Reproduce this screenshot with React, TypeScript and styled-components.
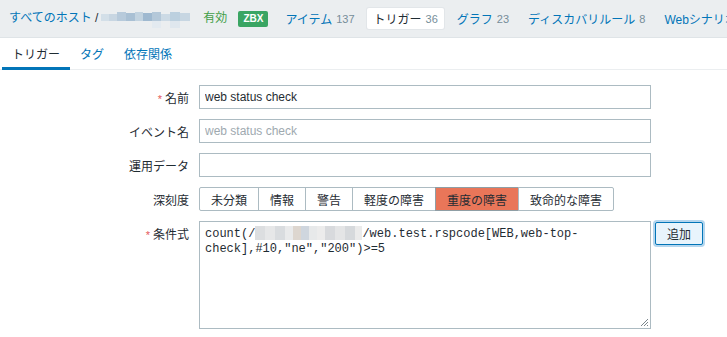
import React from "react";
import styled, { createGlobalStyle } from "styled-components";

const GlobalStyle = createGlobalStyle`
  html, body {
    margin: 0;
    padding: 0;
    background: #ffffff;
  }
  body {
    font-family: "Liberation Sans", "Noto Sans CJK JP", sans-serif;
    font-size: 12px;
    color: #1f2c33;
    overflow: hidden;
  }
`;

const Page = styled.div`
  width: 727px;
  height: 337px;
  overflow: hidden;
  background: #ffffff;
`;

const HostBar = styled.nav`
  height: 37px;
  background: #ebeef0;
  border-bottom: 1px solid #dfe4e7;
  display: flex;
  align-items: center;
  padding-left: 9px;
  white-space: nowrap;
  overflow: hidden;

  & > * {
    flex-shrink: 0;
  }
`;

const Crumb = styled.span<{ $tone?: "link" | "plain" | "green" }>`
  color: ${(p) =>
    p.$tone === "plain" ? "#1f2c33" : p.$tone === "green" ? "#429e47" : "#0275b8"};
  line-height: 21px;
`;

const Blurred = styled.svg`
  display: block;
  margin: 3px 13px 0 3px;
`;

const Badge = styled.span`
  display: inline-flex;
  align-items: center;
  justify-content: center;
  width: 30px;
  height: 16px;
  margin: 0 4px 0 11px;
  background: #3aa563;
  color: #ffffff;
  font-weight: bold;
  font-size: 10px;
  border-radius: 2px;
`;

const HostItem = styled.a<{ $active?: boolean }>`
  display: inline-flex;
  align-items: center;
  height: 21px;
  padding: 0 6px 0 7px;
  margin-left: 6px;
  color: ${(p) => (p.$active ? "#1f2c33" : "#0275b8")};
  background: ${(p) => (p.$active ? "#ffffff" : "transparent")};
  border-radius: 2px;
  box-shadow: ${(p) => (p.$active ? "0 0 0 1px #e2e6e9" : "none")};
  text-decoration: none;
`;

const Count = styled.span`
  margin-left: 4px;
  color: #768d99;
  font-size: 11px;
`;

const TabBar = styled.div`
  display: flex;
  padding-left: 2px;
  border-bottom: 1px solid #ebeef0;
  height: 31px;
`;

const Tab = styled.a<{ $active?: boolean }>`
  display: flex;
  align-items: center;
  padding: 2px 10px 0 10px;
  color: ${(p) => (p.$active ? "#1f2c33" : "#0275b8")};
  border-bottom: 3px solid ${(p) => (p.$active ? "#0275b8" : "transparent")};
  margin-bottom: -1px;
  text-decoration: none;
`;

const Form = styled.div`
  display: grid;
  grid-template-columns: 189px 452px auto;
  column-gap: 10px;
  row-gap: 10px;
  padding-top: 15px;
  align-items: center;
`;

const Label = styled.label<{ $top?: boolean }>`
  text-align: right;
  align-self: ${(p) => (p.$top ? "start" : "center")};
  padding-top: ${(p) => (p.$top ? "4px" : "0")};
  white-space: nowrap;
`;

const Req = styled.span`
  color: #e45959;
  font-size: 11px;
  margin-right: 3px;
`;

const TextInput = styled.input`
  box-sizing: border-box;
  width: 452px;
  height: 24px;
  border: 1px solid #acbbc2;
  padding: 0 5px;
  font-family: "Liberation Sans", "Noto Sans CJK JP", sans-serif;
  font-size: 12px;
  color: #1f2c33;
  outline: none;
  &::placeholder {
    color: #9ea9af;
  }
`;

const Empty = styled.span``;

const Segments = styled.div`
  display: flex;
  justify-self: start;
`;

const Segment = styled.span<{ $on?: boolean }>`
  display: flex;
  align-items: center;
  height: 22px;
  padding: 0 11px;
  border: 1px solid ${(p) => (p.$on ? "#8f9ea5" : "#acbbc2")};
  margin-left: -1px;
  background: ${(p) => (p.$on ? "#e97659" : "#ffffff")};
  color: #1f2c33;
  &:first-child {
    margin-left: 0;
    border-radius: 2px 0 0 2px;
  }
  &:last-child {
    border-radius: 0 2px 2px 0;
  }
`;

const ExprBox = styled.div`
  position: relative;
  box-sizing: border-box;
  width: 452px;
  height: 108px;
  border: 1px solid #acbbc2;
  padding: 4px 5px;
  font-family: "Liberation Mono", monospace;
  font-size: 12px;
  line-height: 15px;
  color: #1f2c33;
`;

const Pixelated = styled.span`
  display: inline-block;
  width: 107px;
  height: 14px;
  vertical-align: -3px;
  background: linear-gradient(
    90deg,
    #dcdee0 0 10px,
    #e6e7e8 10px 20px,
    #d9dcdf 20px 30px,
    #e9eaeb 30px 38px,
    #ddd6cf 38px 46px,
    #cfd6de 46px 54px,
    #e7e9ea 54px 62px,
    #ececec 62px 70px,
    #d8dadd 70px 80px,
    #e4e5e6 80px 90px,
    #d6d9dc 90px 100px,
    #ebebeb 100px 107px
  );
`;

const Grip = styled.svg`
  position: absolute;
  right: 1px;
  bottom: 1px;
`;

const AddButton = styled.button`
  align-self: start;
  justify-self: start;
  margin-left: -6px;
  margin-top: 1px;
  height: 23px;
  padding: 0 11px;
  border: 1px solid #0275b8;
  border-radius: 2px;
  background: #e8f4fc;
  box-shadow: 0 0 0 2px #b4d6ee;
  color: #1f2c33;
  font-family: "Liberation Sans", "Noto Sans CJK JP", sans-serif;
  font-size: 12px;
`;

const BuilderLink = styled.a`
  grid-column: 2;
  color: #0275b8;
  margin-top: -4px;
  padding-left: 2px;
`;

const blurBlocks: [number, number, number, number, string][] = [
  [0, 2, 8, 7, "#d3dfe8"],
  [8, 2, 8, 7, "#c8d6e2"],
  [16, 0, 9, 9, "#b7cadb"],
  [25, 1, 9, 8, "#a9c0d4"],
  [34, 0, 8, 9, "#c2d3e0"],
  [42, 1, 9, 8, "#9fb9d0"],
  [51, 0, 9, 9, "#b4c8d9"],
  [60, 2, 9, 7, "#ccdae5"],
  [69, 0, 10, 9, "#bcd0df"],
  [79, 1, 10, 8, "#c7d6e2"],
  [51, 9, 9, 7, "#e3eaf0"],
  [69, 9, 10, 7, "#dfe7ee"],
];

export default function App() {
  return (
    <Page>
      <GlobalStyle />
      <HostBar>
        <Crumb>すべてのホスト</Crumb>
        <Crumb $tone="plain">&nbsp;/</Crumb>
        <Blurred width="89" height="17" viewBox="0 0 89 17">
          {blurBlocks.map(([x, y, w, h, c], i) => (
            <rect key={i} x={x} y={y} width={w} height={h} fill={c} />
          ))}
        </Blurred>
        <Crumb $tone="green">有効</Crumb>
        <Badge>ZBX</Badge>
        <HostItem>
          アイテム<Count>137</Count>
        </HostItem>
        <HostItem $active>
          トリガー<Count>36</Count>
        </HostItem>
        <HostItem>
          グラフ<Count>23</Count>
        </HostItem>
        <HostItem>
          ディスカバリルール<Count>8</Count>
        </HostItem>
        <HostItem>Webシナリオ</HostItem>
      </HostBar>

      <TabBar>
        <Tab $active>トリガー</Tab>
        <Tab>タグ</Tab>
        <Tab>依存関係</Tab>
      </TabBar>

      <Form>
        <Label>
          <Req>*</Req>名前
        </Label>
        <TextInput defaultValue="web status check" />
        <Empty />

        <Label>イベント名</Label>
        <TextInput placeholder="web status check" />
        <Empty />

        <Label>運用データ</Label>
        <TextInput />
        <Empty />

        <Label>深刻度</Label>
        <Segments>
          <Segment>未分類</Segment>
          <Segment>情報</Segment>
          <Segment>警告</Segment>
          <Segment>軽度の障害</Segment>
          <Segment $on>重度の障害</Segment>
          <Segment>致命的な障害</Segment>
        </Segments>
        <Empty />

        <Label $top>
          <Req>*</Req>条件式
        </Label>
        <ExprBox>
          count(/<Pixelated />/web.test.rspcode[WEB,web-top-
          <br />
          check],#10,"ne","200")&gt;=5
          <Grip width="9" height="9" viewBox="0 0 9 9">
            <path d="M8 1 L1 8 M8 4 L4 8 M8 7 L7 8" stroke="#7b868c" strokeWidth="1" />
          </Grip>
        </ExprBox>
        <AddButton>追加</AddButton>

        <BuilderLink>条件式ビルダー</BuilderLink>
      </Form>
    </Page>
  );
}
